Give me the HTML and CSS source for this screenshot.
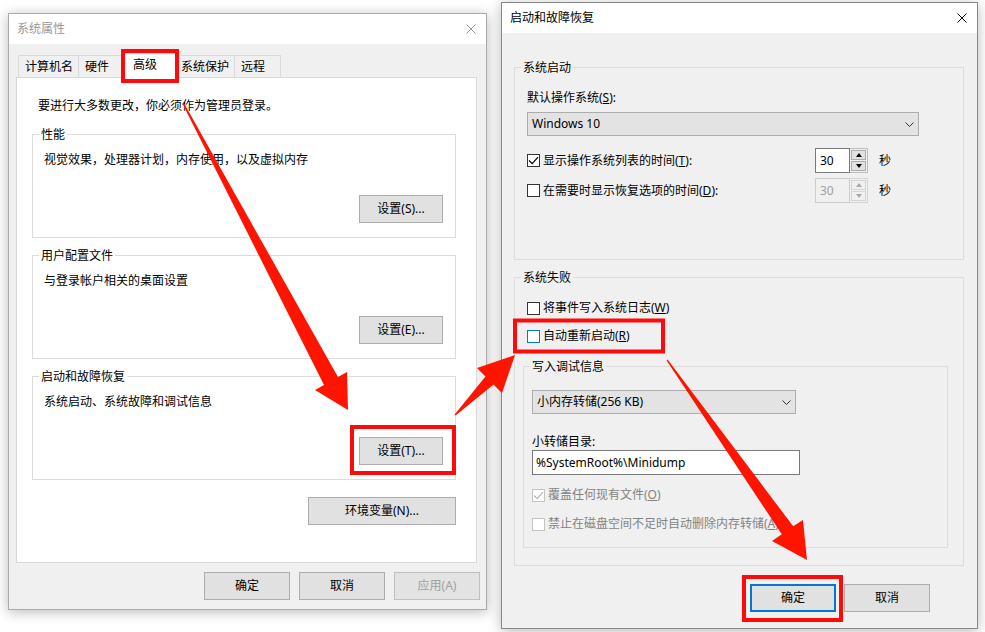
FILE: index.html
```html
<!DOCTYPE html>
<html lang="zh-CN">
<head>
    <meta charset="UTF-8">
    <meta name="viewport" content="width=device-width, initial-scale=1.0">
    <title>系统属性 - 启动和故障恢复</title>
    <link rel="stylesheet" href="styles.css">
</head>
<body>

    <!-- 系统属性 (inactive) -->
    <div class="window window-system">
        <div class="titlebar titlebar-inactive">
            <span class="title">系统属性</span>
            <svg class="close" viewBox="0 0 10 10"><path d="M0.5 0.5L9.5 9.5M9.5 0.5L0.5 9.5"/></svg>
        </div>
        <div class="window-body">
            <div class="tabs">
                <div class="tab">计算机名</div>
                <div class="tab">硬件</div>
                <div class="tab tab-active">高级</div>
                <div class="tab">系统保护</div>
                <div class="tab">远程</div>
            </div>
            <div class="tab-panel">
                <p class="note">要进行大多数更改，你必须作为管理员登录。</p>

                <div class="group">
                    <div class="group-title">性能</div>
                    <div class="group-body">
                        <p>视觉效果，处理器计划，内存使用，以及虚拟内存</p>
                        <div class="group-actions"><button class="btn btn-settings">设置(S)...</button></div>
                    </div>
                </div>

                <div class="group">
                    <div class="group-title">用户配置文件</div>
                    <div class="group-body">
                        <p>与登录帐户相关的桌面设置</p>
                        <div class="group-actions"><button class="btn btn-settings">设置(E)...</button></div>
                    </div>
                </div>

                <div class="group">
                    <div class="group-title">启动和故障恢复</div>
                    <div class="group-body">
                        <p>系统启动、系统故障和调试信息</p>
                        <div class="group-actions"><button class="btn btn-settings">设置(T)...</button></div>
                    </div>
                </div>

                <div class="panel-actions"><button class="btn btn-env">环境变量(N)...</button></div>
            </div>
            <div class="dialog-buttons">
                <button class="btn btn-dialog">确定</button>
                <button class="btn btn-dialog">取消</button>
                <button class="btn btn-dialog" disabled>应用(A)</button>
            </div>
        </div>
    </div>

    <!-- 启动和故障恢复 (active) -->
    <div class="window window-startup">
        <div class="titlebar">
            <span class="title">启动和故障恢复</span>
            <svg class="close" viewBox="0 0 10 10"><path d="M0.5 0.5L9.5 9.5M9.5 0.5L0.5 9.5"/></svg>
        </div>
        <div class="window-body">
            <div class="group group-startup">
                <div class="group-title">系统启动</div>
                <div class="group-body">
                    <div class="field-label">默认操作系统(<u>S</u>):</div>
                    <div class="select select-os">
                        <span>Windows 10</span>
                        <svg class="chevron" viewBox="0 0 9 5"><path d="M0.5 0.5L4.5 4.5L8.5 0.5"/></svg>
                    </div>
                    <div class="timer-row">
                        <div class="check-row">
                            <span class="check"><svg viewBox="0 0 11 11"><path d="M1 5.5L4.2 8.6L10 2.2"/></svg></span>
                            <span>显示操作系统列表的时间(<u>T</u>):</span>
                        </div>
                        <div class="spin">
                            <span class="spin-value">30</span>
                            <span class="spin-btns"><span class="spin-btn spin-up"></span><span class="spin-btn spin-down"></span></span>
                        </div>
                        <span class="unit">秒</span>
                    </div>
                    <div class="timer-row timer-row-next">
                        <div class="check-row">
                            <span class="check"></span>
                            <span>在需要时显示恢复选项的时间(<u>D</u>):</span>
                        </div>
                        <div class="spin spin-disabled">
                            <span class="spin-value">30</span>
                            <span class="spin-btns"><span class="spin-btn spin-up"></span><span class="spin-btn spin-down"></span></span>
                        </div>
                        <span class="unit">秒</span>
                    </div>
                </div>
            </div>

            <div class="group group-failure">
                <div class="group-title">系统失败</div>
                <div class="group-body">
                    <div class="check-row">
                        <span class="check"></span>
                        <span>将事件写入系统日志(<u>W</u>)</span>
                    </div>
                    <div class="check-row check-row-next">
                        <span class="check check-focus"></span>
                        <span>自动重新启动(<u>R</u>)</span>
                    </div>

                    <div class="group group-debug">
                        <div class="group-title">写入调试信息</div>
                        <div class="group-body">
                            <div class="select select-dump">
                                <span>小内存转储(256 KB)</span>
                                <svg class="chevron" viewBox="0 0 9 5"><path d="M0.5 0.5L4.5 4.5L8.5 0.5"/></svg>
                            </div>
                            <div class="field-label field-label-dir">小转储目录:</div>
                            <div class="textbox">%SystemRoot%\Minidump</div>
                            <div class="check-row check-row-disabled check-row-overwrite">
                                <span class="check check-disabled"><svg viewBox="0 0 11 11"><path d="M1 5.5L4.2 8.6L10 2.2"/></svg></span>
                                <span>覆盖任何现有文件(<u>O</u>)</span>
                            </div>
                            <div class="check-row check-row-disabled check-row-next-dim">
                                <span class="check check-disabled"></span>
                                <span>禁止在磁盘空间不足时自动删除内存转储(<u>A</u>)</span>
                            </div>
                        </div>
                    </div>
                </div>
            </div>

            <div class="dialog-buttons dialog-buttons-startup">
                <button class="btn btn-dialog btn-default">确定</button>
                <button class="btn btn-dialog">取消</button>
            </div>
        </div>
    </div>

    <!-- 标注：红框和箭头 -->
    <svg class="annotations" viewBox="0 0 985 632">
        <g class="mark-box">
            <rect x="123" y="51" width="54" height="30"/>
            <rect x="352" y="427" width="102" height="46"/>
            <rect x="515" y="320.5" width="148" height="31"/>
            <rect x="744" y="577" width="97" height="43"/>
        </g>
        <g class="mark-arrow">
            <polygon points="183.6,102.6 338,377 347,372 348,410 315,390 324,385 182.4,103.4"/>
            <polygon points="455.6,415.6 493.5,384.5 502,393 515,355 477,368 485.5,376.5 454.6,414.6"/>
            <polygon points="667.6,359.6 793.2,526.3 803,520 807,560 772,541 781.8,534.3 666.6,360.4"/>
        </g>
    </svg>

</body>
</html>
```

FILE: styles.css
```css
* {
    box-sizing: border-box;
}

body {
    margin: 0;
    width: 985px;
    height: 632px;
    position: relative;
    overflow: hidden;
    background: #fff;
    color: #000;
    font-family: "Noto Sans", "Noto Sans CJK SC", sans-serif;
    font-size: 12px;
    line-height: 16px;
}

p {
    margin: 0;
}

/* windows on the desktop */
.window {
    position: absolute;
    display: flex;
    flex-direction: column;
    background: #f0f0f0;
    border: 1px solid #aaa;
    box-shadow: 0 2px 12px rgba(0, 0, 0, 0.28);
}

.window-system {
    left: 8px;
    top: 13px;
    width: 479px;
    height: 597px;
}

.window-startup {
    left: 501px;
    top: 2px;
    width: 477px;
    height: 627px;
    border-color: #888;
}

.titlebar {
    flex: none;
    height: 30px;
    display: flex;
    align-items: center;
    justify-content: space-between;
    padding: 0 10px 0 8px;
    background: #fff;
}

.close {
    width: 10px;
    height: 10px;
    fill: none;
    stroke: #000;
    stroke-width: 1;
}

.titlebar-inactive .title {
    color: #999;
}

.titlebar-inactive .close {
    stroke: #999;
}

.window-body {
    flex: 1;
}

.window-system .window-body {
    padding: 9px 6px 0 7px;
}

.window-startup .window-body {
    padding: 34px 13px 0 12px;
}

/* tabs */
.tabs {
    display: flex;
    align-items: flex-end;
    height: 24px;
    margin-left: 2px;
    position: relative;
    z-index: 1;
}

.tab {
    height: 22px;
    min-width: 47px;
    margin-right: -1px;
    padding: 3px 5px 0 6px;
    border: 1px solid #d9d9d9;
    border-bottom: 0;
    background: #f0f0f0;
    white-space: nowrap;
}

.tab-active {
    height: 25px;
    min-width: 55px;
    margin: 0 -3px -1px -2px;
    padding: 3px 5px 0 10px;
    background: #fff;
    position: relative;
}

.tab-panel {
    height: 486px;
    margin-right: 3px;
    padding: 20px 20px 0 15px;
    background: #fff;
    border: 1px solid #d9d9d9;
}

.note {
    margin: 0 0 20px 6px;
}

/* group boxes */
.group {
    border: 1px solid #dcdcdc;
}

.group-title {
    width: fit-content;
    margin: -8px 0 0 6px;
    padding: 0 2px;
    background: #f0f0f0;
    white-space: nowrap;
}

.tab-panel .group {
    margin-bottom: 17px;
}

.tab-panel .group-title {
    background: #fff;
}

.tab-panel .group-body {
    padding: 9px 12px 14px 11px;
}

.group-actions {
    display: flex;
    justify-content: flex-end;
    margin-top: 27px;
}

.panel-actions {
    display: flex;
    justify-content: flex-end;
}

/* buttons */
.btn {
    height: 28px;
    padding: 0;
    border: 1px solid #adadad;
    background: #e1e1e1;
    color: #000;
    font: inherit;
    line-height: 16px;
    white-space: nowrap;
}

.btn-settings {
    width: 84px;
}

.btn-env {
    width: 148px;
}

.btn-dialog {
    width: 86px;
}

.btn:disabled {
    color: #a0a0a0;
    border-color: #bfbfbf;
    background: #e3e3e3;
}

.btn-default {
    border: 2px solid #0078d7;
}

.dialog-buttons {
    display: flex;
    justify-content: flex-end;
    gap: 9px;
    margin-top: 9px;
}

.dialog-buttons-startup {
    gap: 8px;
    margin-top: 18px;
    margin-right: 34px;
}

/* startup dialog */
.group-startup .group-body {
    padding: 14px 12px 56px 12px;
}

.group-failure {
    margin-top: 17px;
}

.group-failure > .group-body {
    padding: 14px 15px 17px 12px;
}

.group-debug {
    margin: 22px 0 0 -4px;
}

.group-debug .group-body {
    padding: 15px 8px 15px 8px;
}

.field-label {
    white-space: nowrap;
}

.field-label-dir {
    margin-top: 20px;
}

.select {
    height: 24px;
    display: flex;
    align-items: center;
    justify-content: space-between;
    padding: 0 4px 0 4px;
    border: 1px solid #adadad;
    background: #e3e3e3;
    white-space: nowrap;
}

.select-os {
    width: 392px;
    margin-top: 6px;
}

.select-dump {
    width: 264px;
}

.chevron {
    width: 9px;
    height: 5px;
    fill: none;
    stroke: #333;
    stroke-width: 1;
}

.textbox {
    width: 268px;
    height: 25px;
    padding: 0 3px;
    border: 1px solid #7a7a7a;
    background: #fff;
    line-height: 23px;
    white-space: nowrap;
}

.timer-row {
    display: grid;
    grid-template-columns: 288px 53px auto;
    align-items: center;
    height: 25px;
    margin-top: 12px;
}

.timer-row-next {
    margin-top: 5px;
}

.unit {
    margin-left: 11px;
}

.check-row {
    display: flex;
    align-items: center;
    gap: 3px;
    height: 16px;
    white-space: nowrap;
}

.check-row-next {
    margin-top: 12px;
}

.check-row-overwrite {
    margin-top: 12px;
}

.check-row-next-dim {
    margin-top: 13px;
}

.check-row-disabled {
    color: #838383;
}

.check {
    flex: none;
    width: 13px;
    height: 13px;
    display: flex;
    align-items: center;
    justify-content: center;
    border: 1px solid #333;
    background: #fff;
}

.check svg {
    width: 11px;
    height: 11px;
    fill: none;
    stroke: #000;
    stroke-width: 1.2;
}

.check-focus {
    border-color: #0078d7;
}

.check-disabled {
    border-color: #c4c4c4;
}

.check-disabled svg {
    stroke: #b4b4b4;
}

/* spin box */
.spin {
    display: flex;
    width: 53px;
    height: 25px;
}

.spin-value {
    flex: 1;
    padding-left: 4px;
    border: 1px solid #7a7a7a;
    background: #fff;
    line-height: 23px;
}

.spin-btns {
    width: 18px;
    display: flex;
    flex-direction: column;
    gap: 1px;
    padding: 1px;
    border: 1px solid #bcbcbc;
    border-left: 0;
    background: #f0f0f0;
}

.spin-btn {
    flex: 1;
    display: flex;
    align-items: center;
    justify-content: center;
    border: 1px solid #adadad;
    background: #e1e1e1;
}

.spin-btn::after {
    content: "";
    border-left: 3px solid transparent;
    border-right: 3px solid transparent;
}

.spin-up::after {
    border-bottom: 4px solid #000;
}

.spin-down::after {
    border-top: 4px solid #000;
}

.spin-disabled .spin-value {
    color: #a0a0a0;
    border-color: #cccccc;
    background: #f0f0f0;
}

.spin-disabled .spin-btns {
    border-color: #d5d5d5;
}

.spin-disabled .spin-btn {
    border-color: #d5d5d5;
    background: #f0f0f0;
}

.spin-disabled .spin-up::after {
    border-bottom-color: #a8a8a8;
}

.spin-disabled .spin-down::after {
    border-top-color: #a8a8a8;
}

/* red annotations drawn over the screenshot */
.annotations {
    position: absolute;
    left: 0;
    top: 0;
    width: 985px;
    height: 632px;
    z-index: 10;
    pointer-events: none;
}

.mark-box rect {
    fill: none;
    stroke: #ff0a0a;
    stroke-width: 4;
}

.mark-arrow polygon {
    fill: #ff1400;
}
```
